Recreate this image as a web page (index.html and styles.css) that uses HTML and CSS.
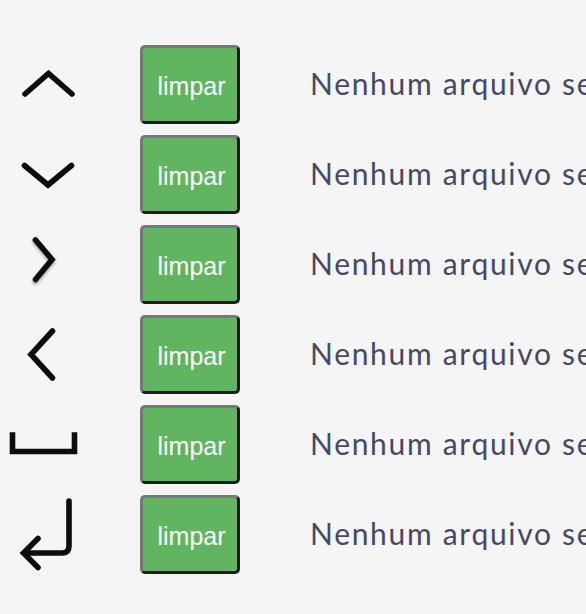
FILE: index.html
```html
<!DOCTYPE html>
<html lang="pt">
<head>
<meta charset="utf-8">
<title>Teclas</title>
<link rel="stylesheet" href="styles.css">
</head>
<body>
<div class="list">
  <div class="row">
    <div class="key"><svg viewBox="0 0 96 79" width="96" height="79"><path d="M25 49 L48.5 28.5 L72 49" /></svg></div>
    <button class="clear">limpar</button>
    <span class="file">Nenhum arquivo selecionado</span>
  </div>
  <div class="row">
    <div class="key"><svg viewBox="0 0 96 79" width="96" height="79"><path d="M24.5 30.5 L48 50 L71.5 30.5" /></svg></div>
    <button class="clear">limpar</button>
    <span class="file">Nenhum arquivo selecionado</span>
  </div>
  <div class="row">
    <div class="key"><svg viewBox="0 0 96 79" width="96" height="79"><path class="soft" d="M35.5 15 L52 34.5 L35.5 54.5" /></svg></div>
    <button class="clear">limpar</button>
    <span class="file">Nenhum arquivo selecionado</span>
  </div>
  <div class="row">
    <div class="key"><svg viewBox="0 0 96 79" width="96" height="79"><path d="M52.5 16 L31 39.5 L52.5 63" /></svg></div>
    <button class="clear">limpar</button>
    <span class="file">Nenhum arquivo selecionado</span>
  </div>
  <div class="row">
    <div class="key"><svg viewBox="0 0 96 79" width="96" height="79"><path class="sq" d="M12.5 30 L12.5 46.5 L74.5 46.5 L74.5 30" /></svg></div>
    <button class="clear">limpar</button>
    <span class="file">Nenhum arquivo selecionado</span>
  </div>
  <div class="row">
    <div class="key"><svg viewBox="0 0 96 79" width="96" height="79"><path d="M69 6 L69 51 Q69 58 62 58 L24 58 M38 43.5 L23.5 58 L38 72.5" /></svg></div>
    <button class="clear">limpar</button>
    <span class="file">Nenhum arquivo selecionado</span>
  </div>
</div>
</body>
</html>
```

FILE: styles.css
```css
html, body {
  margin: 0;
  padding: 0;
  background: #f5f5f5;
  overflow: hidden;
}

.list {
  display: flex;
  flex-direction: column;
  gap: 11px;
  padding-top: 45px;
}

.row {
  display: flex;
  align-items: center;
  height: 79px;
  white-space: nowrap;
}

.key {
  width: 96px;
  height: 79px;
  flex: none;
  margin-right: 44px;
}

.key svg {
  display: block;
  overflow: visible;
}

.key path {
  fill: none;
  stroke: #0d0d0d;
  stroke-width: 5.6;
  stroke-linecap: round;
  stroke-linejoin: miter;
}

.key path.sq {
  stroke-linecap: square;
  stroke-width: 5.6;
}

.key path.soft {
  filter: drop-shadow(0 2px 1.5px rgba(0,0,0,0.35));
}

.clear {
  flex: none;
  width: 100px;
  height: 79px;
  box-sizing: border-box;
  margin: 0 70px 0 0;
  padding: 3px 0 0 3px;
  background: #61b561;
  color: #fff;
  font-family: "Liberation Sans", Arial, sans-serif;
  font-size: 25px;
  border-style: solid;
  border-width: 3px;
  border-color: #777 #1e1e1e #1e1e1e #777;
  border-radius: 5px;
}

.file {
  font-family: Lato, "Noto Sans", sans-serif;
  font-size: 30px;
  color: #484866;
  letter-spacing: 1.7px;
  margin-top: -3px;
}
```
